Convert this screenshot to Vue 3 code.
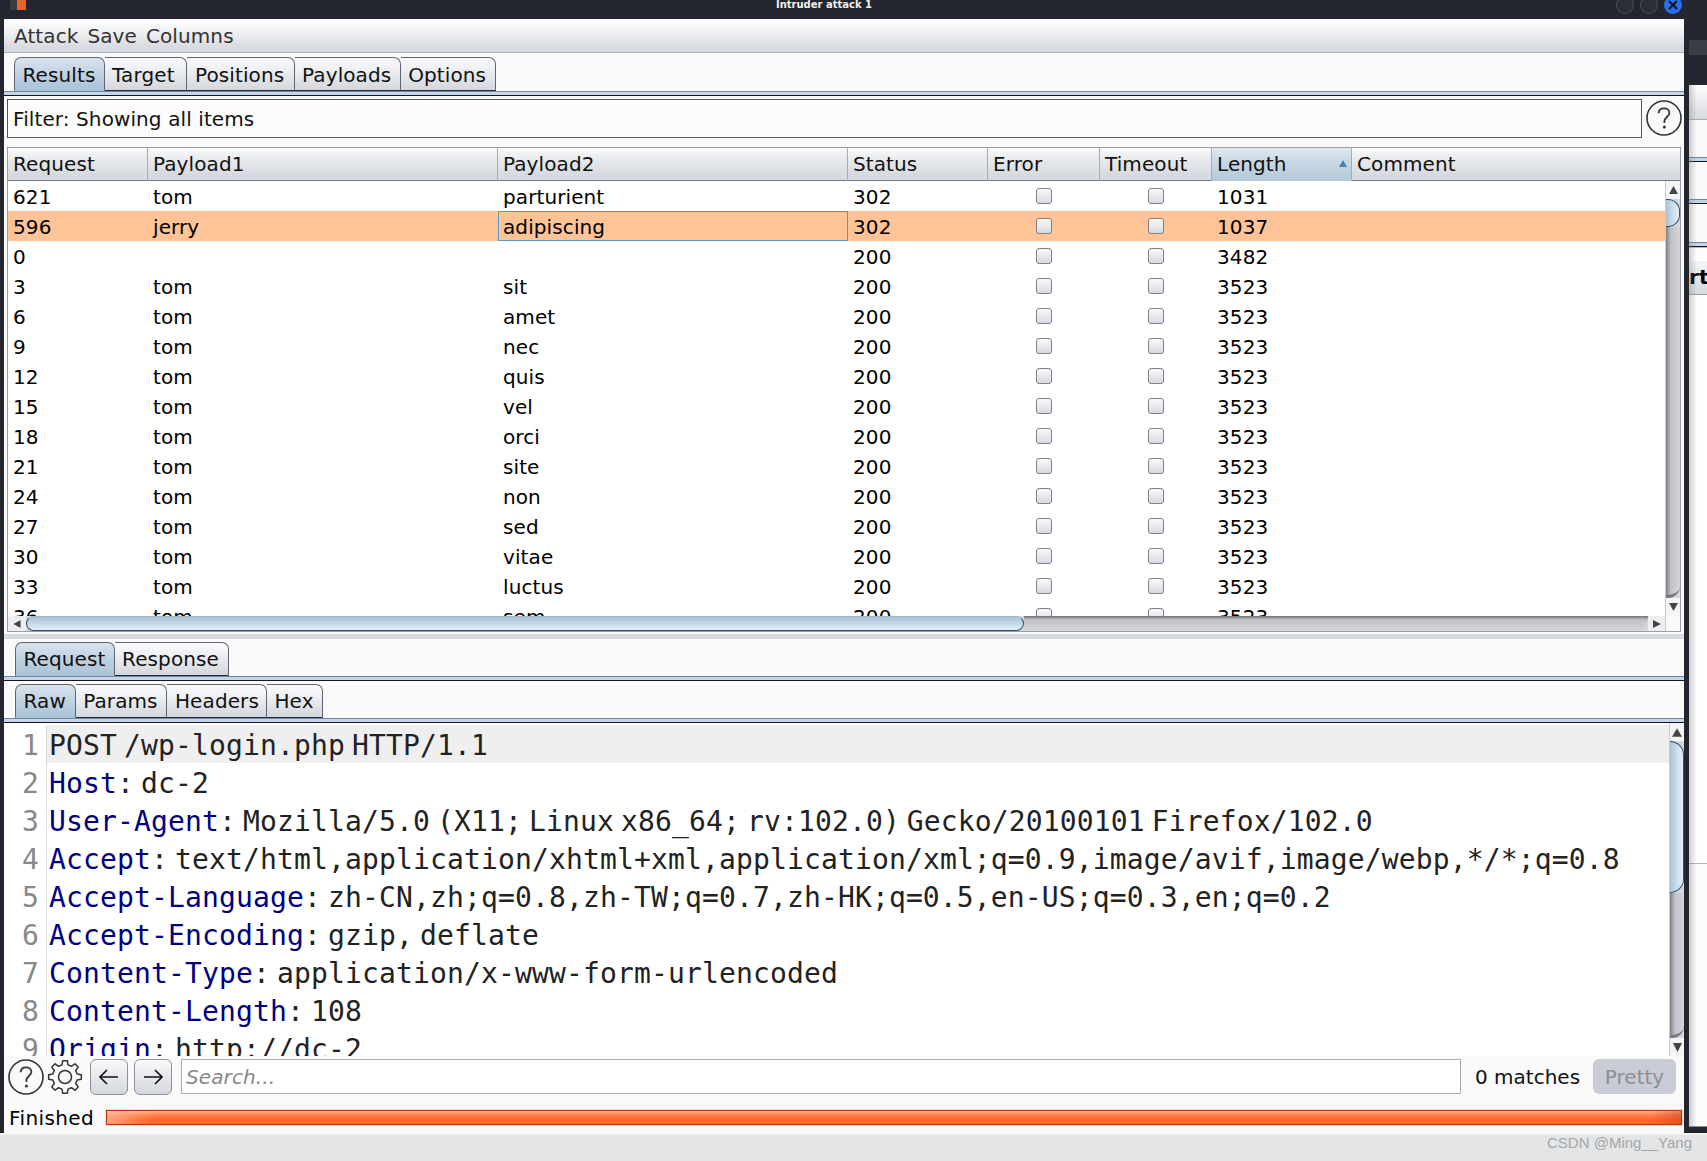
<script setup>
const menus = ['Attack', 'Save', 'Columns']
const mainTabs = [
  { label: 'Results', width: 90.6 },
  { label: 'Target', width: 82.9 },
  { label: 'Positions', width: 107.1 },
  { label: 'Payloads', width: 106.1 },
  { label: 'Options', width: 95.7 }
]
const messageTabs = [
  { label: 'Request', width: 99.6 },
  { label: 'Response', width: 114 }
]
const viewTabs = [
  { label: 'Raw', width: 60.7 },
  { label: 'Params', width: 91.8 },
  { label: 'Headers', width: 99.5 },
  { label: 'Hex', width: 56 }
]
const columns = ['Request', 'Payload1', 'Payload2', 'Status', 'Error', 'Timeout', 'Length', 'Comment']
const rows = [
  ['621', 'tom', 'parturient', '302', '1031'],
  ['596', 'jerry', 'adipiscing', '302', '1037'],
  ['0', '', '', '200', '3482'],
  ['3', 'tom', 'sit', '200', '3523'],
  ['6', 'tom', 'amet', '200', '3523'],
  ['9', 'tom', 'nec', '200', '3523'],
  ['12', 'tom', 'quis', '200', '3523'],
  ['15', 'tom', 'vel', '200', '3523'],
  ['18', 'tom', 'orci', '200', '3523'],
  ['21', 'tom', 'site', '200', '3523'],
  ['24', 'tom', 'non', '200', '3523'],
  ['27', 'tom', 'sed', '200', '3523'],
  ['30', 'tom', 'vitae', '200', '3523'],
  ['33', 'tom', 'luctus', '200', '3523'],
  ['36', 'tom', 'sem', '200', '3523']
]
const lines = [
  ['', 'POST /wp-login.php HTTP/1.1'],
  ['Host', ': dc-2'],
  ['User-Agent', ': Mozilla/5.0 (X11; Linux x86_64; rv:102.0) Gecko/20100101 Firefox/102.0'],
  ['Accept', ': text/html,application/xhtml+xml,application/xml;q=0.9,image/avif,image/webp,*/*;q=0.8'],
  ['Accept-Language', ': zh-CN,zh;q=0.8,zh-TW;q=0.7,zh-HK;q=0.5,en-US;q=0.3,en;q=0.2'],
  ['Accept-Encoding', ': gzip, deflate'],
  ['Content-Type', ': application/x-www-form-urlencoded'],
  ['Content-Length', ': 108'],
  ['Origin', ': http://dc-2']
]
const gearPath = (() => {
  const teeth = 8
  const pts = []
  for (let i = 0; i < teeth; i++) {
    const a = (i / teeth) * Math.PI * 2 - Math.PI / 2
    const w = Math.PI / teeth
    const add = (r, t) => pts.push([(18 + r * Math.cos(t)).toFixed(2), (18 + r * Math.sin(t)).toFixed(2)])
    add(12.5, a - w * 0.62)
    add(16.5, a - w * 0.36)
    add(16.5, a + w * 0.36)
    add(12.5, a + w * 0.62)
  }
  return 'M' + pts.map((p) => p.join(' ')).join('L') + 'Z'
})()
</script>

<template>
  <div class="page">
    <div class="top">
      <div class="main-col">
        <div class="titlebar">
          <div class="logo"><span class="logo-l"></span><span class="logo-r"></span></div>
          <div class="title">Intruder attack 1</div>
          <div class="winbtns">
            <span class="wb"></span>
            <span class="wb"></span>
            <span class="wb close">
              <svg width="18" height="18" viewBox="0 0 18 18"><path d="M5 5L13 13M13 5L5 13" stroke="#11151f" stroke-width="2.2" /></svg>
            </span>
          </div>
        </div>
        <div class="window">
          <div class="menubar"><span v-for="m in menus" :key="m">{{ m }}</span></div>

          <div class="tabs first-tabs">
            <div v-for="(t, i) in mainTabs" :key="t.label" class="tab" :class="{ active: i === 0 }" :style="{ width: t.width + 'px' }">{{ t.label }}</div>
          </div>
          <div class="tabline"></div>

          <div class="filter-row">
            <div class="filter">Filter: Showing all items</div>
            <svg class="help" width="36" height="36" viewBox="0 0 36 36">
              <circle cx="18" cy="18" r="17" fill="none" stroke="#333" stroke-width="1.6" />
              <path d="M12.6 13.2C12.8 9.8 15.2 8.4 18 8.4C21 8.4 23.4 10.2 23.4 13C23.4 16.6 18.4 17 18.4 21.6V23" fill="none" stroke="#333" stroke-width="1.8" />
              <circle cx="18.4" cy="27" r="1.5" fill="#333" />
            </svg>
          </div>

          <div class="table">
            <div class="thead">
              <div v-for="c in columns" :key="c" class="th" :class="{ sorted: c === 'Length' }">
                {{ c }}
                <svg v-if="c === 'Length'" class="sort" width="8" height="7" viewBox="0 0 8 7"><path d="M4 0L8 7H0Z" fill="#4b80b5" /></svg>
              </div>
            </div>
            <div class="tbody">
              <div class="rows">
                <div v-for="(r, i) in rows" :key="r[0]" class="row" :class="{ selected: i === 1 }">
                  <div class="td">{{ r[0] }}</div>
                  <div class="td">{{ r[1] }}</div>
                  <div class="td" :class="{ focused: i === 1 }">{{ r[2] }}</div>
                  <div class="td">{{ r[3] }}</div>
                  <div class="td center"><span class="check"></span></div>
                  <div class="td center"><span class="check"></span></div>
                  <div class="td">{{ r[4] }}</div>
                  <div class="td"></div>
                </div>
              </div>
              <div class="vbar">
                <div class="arrow-v"><svg width="9" height="8" viewBox="0 0 10 9"><path d="M5 0L10 9H0Z" fill="#444" /></svg></div>
                <div class="vthumb small"></div>
                <div class="vtrack"></div>
                <div class="arrow-v"><svg width="9" height="8" viewBox="0 0 10 9"><path d="M5 9L10 0H0Z" fill="#444" /></svg></div>
              </div>
            </div>
            <div class="hbar">
              <div class="arrow-h left"><svg width="8" height="8" viewBox="0 0 8 9"><path d="M0 4.5L8 0V9Z" fill="#444" /></svg></div>
              <div class="hthumb"></div>
              <div class="htrack"></div>
              <div class="arrow-h right"><svg width="8" height="8" viewBox="0 0 9 9"><path d="M9 4.5L0 0V9Z" fill="#444" /></svg></div>
              <div class="corner"></div>
            </div>
          </div>

          <div class="divider"></div>

          <div class="tabs lower">
            <div v-for="(t, i) in messageTabs" :key="t.label" class="tab" :class="{ active: i === 0 }" :style="{ width: t.width + 'px' }">{{ t.label }}</div>
          </div>
          <div class="tabline"></div>
          <div class="tabs lower">
            <div v-for="(t, i) in viewTabs" :key="t.label" class="tab" :class="{ active: i === 0 }" :style="{ width: t.width + 'px' }">{{ t.label }}</div>
          </div>
          <div class="tabline"></div>

          <div class="editor">
            <div class="code">
              <div v-for="(l, i) in lines" :key="i" class="line" :class="{ current: i === 0 }">
                <span class="num">{{ i + 1 }}</span>
                <span class="text"><span class="key">{{ l[0] }}</span>{{ l[1] }}</span>
              </div>
            </div>
            <div class="vbar big">
              <div class="arrow-v"><svg width="10" height="9" viewBox="0 0 12 10"><path d="M6 0L12 10H0Z" fill="#444" /></svg></div>
              <div class="vthumb large"></div>
              <div class="vtrack"></div>
              <div class="arrow-v"><svg width="9" height="9" viewBox="0 0 10 10"><path d="M5 10L10 0H0Z" fill="#444" /></svg></div>
            </div>
          </div>

          <div class="toolbar">
            <svg class="t-help" width="36" height="36" viewBox="0 0 36 36">
              <circle cx="18" cy="18" r="17" fill="none" stroke="#333" stroke-width="1.6" />
              <path d="M12.6 13.2C12.8 9.8 15.2 8.4 18 8.4C21 8.4 23.4 10.2 23.4 13C23.4 16.6 18.4 17 18.4 21.6V23" fill="none" stroke="#333" stroke-width="1.8" />
              <circle cx="18.4" cy="27" r="1.5" fill="#333" />
            </svg>
            <svg class="t-gear" width="36" height="36" viewBox="0 0 36 36">
              <path :d="gearPath" fill="none" stroke="#333" stroke-width="1.5" stroke-linejoin="round" />
              <circle cx="18" cy="18" r="6.5" fill="none" stroke="#333" stroke-width="1.5" />
            </svg>
            <button class="nav back">
              <svg width="20" height="16" viewBox="0 0 20 16"><path d="M1 8H19M8 1L1 8L8 15" fill="none" stroke="#111" stroke-width="1.6" /></svg>
            </button>
            <button class="nav fwd">
              <svg width="20" height="16" viewBox="0 0 20 16"><path d="M1 8H19M12 1L19 8L12 15" fill="none" stroke="#111" stroke-width="1.6" /></svg>
            </button>
            <div class="search">Search...</div>
            <span class="matches">0 matches</span>
            <button class="pretty">Pretty</button>
          </div>

          <div class="status">
            <span class="finished">Finished</span>
            <div class="progress"><div class="bar"></div></div>
          </div>
        </div>
      </div>

      <div class="strip">
        <div class="s-dark"><div class="s-lighter"></div></div>
        <div class="s-menu"></div>
        <div class="s-plain s1"></div>
        <div class="tabline"></div>
        <div class="s-plain s1"></div>
        <div class="tabline"></div>
        <div class="s-plain s2"></div>
        <div class="tabline"></div>
        <div class="s-gap"></div>
        <div class="s-tab">rt</div>
        <div class="s-white"></div>
        <div class="s-white2"></div>
        <div class="s-end"></div>
      </div>
    </div>
    <div class="footer"><span>CSDN @Ming__Yang</span></div>
  </div>
</template>

<style>
html, body { margin: 0; padding: 0; background: #e4e5e7; overflow: hidden; }
</style>

<style scoped>
.page {
  width: 1707px;
  height: 1161px;
  display: flex;
  flex-direction: column;
  overflow: hidden;
  font-family: "DejaVu Sans", sans-serif;
  font-size: 20px;
  letter-spacing: 0.1px;
  color: #000;
}
.top { height: 1133px; display: flex; flex: none; }
.main-col {
  width: 1689px;
  flex: none;
  background: #23262f;
  display: flex;
  flex-direction: column;
}
.titlebar { height: 19px; flex: none; position: relative; overflow: hidden; }
.logo { position: absolute; left: 10px; top: -3px; display: flex; }
.logo-l { width: 7px; height: 13px; background: #3c3c40; }
.logo-r { width: 9px; height: 13px; background: #e8632c; }
.title {
  position: absolute;
  left: 0;
  top: -2px;
  width: 1648px;
  text-align: center;
  font: bold 10px/14px "DejaVu Sans", sans-serif;
  letter-spacing: 0;
  color: #f1f1f1;
}
.winbtns { position: absolute; left: 1616px; top: -4px; display: flex; gap: 6px; }
.wb {
  width: 18px;
  height: 18px;
  border-radius: 50%;
  background: #2b2e38;
  box-shadow: inset 0 0 0 1px #4a4d57;
  display: block;
}
.close { background: #2a6fe8; box-shadow: none; }
.close svg { display: block; }

.window {
  width: 1680px;
  height: 1114px;
  margin-left: 4px;
  background: #fafafa;
  display: flex;
  flex-direction: column;
}
.menubar {
  height: 34px;
  flex: none;
  box-sizing: border-box;
  display: flex;
  align-items: center;
  gap: 9px;
  padding-left: 10px;
  background: linear-gradient(#ffffff, #f6f7f8 25%, #d6d9df 90%);
  border-bottom: 1px solid #a9acb3;
  color: #333;
}
.tabs {
  display: flex;
  flex: none;
  height: 34px;
  margin-top: 3px;
  padding-left: 10px;
}
.tabs.lower { padding-left: 11px; }
.first-tabs { margin-top: 4px; }
.tab {
  box-sizing: border-box;
  flex: none;
  height: 34px;
  padding-left: 7.5px;
  line-height: 33px;
  white-space: nowrap;
  border: 1px solid #5f6673;
  border-bottom: 1px solid #222a38;
  border-left-width: 0;
  border-radius: 0 7px 0 0;
  background: linear-gradient(#fbfbfc, #eceef1 40%, #d3d6dc);
  color: #111;
}
.tab:first-child { border-left-width: 1px; border-radius: 7px 7px 0 0; }
.first-tabs .tab { line-height: 34px; }
.tab.active {
  background: linear-gradient(#d9e4ed, #c4d5e3 40%, #a9c3d8);
  border-bottom-color: #a9c3d8;
  border-radius: 7px 7px 0 0;
}
.tabline {
  height: 5px;
  flex: none;
  box-sizing: border-box;
  border-top: 1px solid #73869b;
  background: #c3d6ea;
  border-bottom: 1px solid #14161c;
}
.filter-row {
  display: flex;
  flex: none;
  height: 38px;
  margin-top: 3px;
  padding-left: 3px;
  align-items: flex-start;
}
.filter {
  box-sizing: border-box;
  width: 1635px;
  height: 39px;
  line-height: 38px;
  padding-left: 5px;
  border: 1px solid #55585f;
  background: #fcfcfc;
  color: #111;
}
.help { margin-left: 4px; flex: none; margin-top: 1px; }

.table {
  box-sizing: border-box;
  flex: none;
  width: 1674px;
  height: 485px;
  margin: 10px 0 0 3px;
  border: 1px solid #9a9da5;
  display: flex;
  flex-direction: column;
}
.thead, .row {
  display: grid;
  grid-template-columns: 140px 350px 350px 140px 112px 112px 140px 1fr;
}
.thead {
  height: 33px;
  flex: none;
  box-sizing: border-box;
  border-bottom: 1px solid #74777e;
  background: linear-gradient(#fbfbfc, #eef0f2 20%, #d6d9df 85%);
}
.th {
  box-sizing: border-box;
  padding-left: 5px;
  line-height: 33px;
  border-right: 1px solid #a9acb4;
  color: #111;
  position: relative;
}
.th:last-child { border-right: 0; }
.th.sorted { background: linear-gradient(#e2e9ef, #c8d8e4 40%, #b3c8d9); }
.sort { position: absolute; right: 4px; top: 12px; }
.tbody { flex: 1; min-height: 0; display: flex; }
.rows { flex: 1; min-width: 0; overflow: hidden; background: #fff; }
.row { height: 30px; }
.row.selected { background: #fec396; }
.td {
  box-sizing: border-box;
  height: 30px;
  padding-left: 5px;
  line-height: 32px;
  white-space: nowrap;
}
.td.center { display: flex; align-items: center; justify-content: center; padding-left: 0; }
.td.focused {
  border: 1px solid #5c94cc;
  line-height: 30px;
  padding-left: 4px;
}
.check {
  width: 16px;
  height: 16px;
  box-sizing: border-box;
  border: 1.5px solid #7f828b;
  border-radius: 3px;
  background: linear-gradient(#fafafb, #d6d9e0);
  display: block;
}

.vbar { width: 15px; flex: none; display: flex; flex-direction: column; background: #d6d8dd; border-left: 1px solid #c8cad0; box-sizing: border-box; }
.arrow-v { height: 18px; flex: none; display: flex; align-items: center; justify-content: center; background: #f4f5f6; }
.vthumb {
  flex: none;
  box-sizing: border-box;
  border: 1.5px solid #2f4f6d;
  border-left: 0;
  background: linear-gradient(90deg, #a9c3d8, #c9dcea 50%, #e4f1f9);
}
.vthumb.small { height: 28px; border-radius: 0 12px 12px 0; }
.vthumb.large { height: 152px; border-radius: 0 14px 14px 0; }
.vtrack {
  flex: 1;
  background: linear-gradient(90deg, #7e8085, #c0c2c8 35%, #d4d6dc);
  border-radius: 0 0 12px 0;
  border-bottom: 3px solid #77797e;
}
.hbar { height: 15px; flex: none; display: flex; background: #d6d8dd; }
.arrow-h { flex: none; display: flex; align-items: center; justify-content: center; background: #eceef0; }
.arrow-h.left { width: 18px; }
.arrow-h.right { width: 17px; }
.hthumb {
  width: 998px;
  flex: none;
  box-sizing: border-box;
  border: 1.5px solid #2f4f6d;
  border-top-color: #9fb6c9;
  border-radius: 13px;
  background: linear-gradient(#a9c3d8, #c9dcea 60%, #e2f0f8);
}
.htrack { flex: 1; background: linear-gradient(#6f7176, #c0c2c7 25%, #d4d6db); border-radius: 0 0 14px 0; }
.corner { width: 15px; flex: none; background: #fafafa; border-left: 1px solid #c8cad0; box-sizing: border-box; }
.divider { height: 5px; flex: none; margin-top: 2px; background: #d6d9df; }

.editor { height: 333px; flex: none; display: flex; background: #fff; }
.code {
  flex: 1;
  min-width: 0;
  overflow: hidden;
  padding-top: 2px;
  font-family: "DejaVu Sans Mono", monospace;
  font-size: 28px;
  line-height: 42px;
  letter-spacing: 0.14px;
  word-spacing: -10px;
  color: #222;
}
.line { display: flex; height: 38px; }
.num {
  box-sizing: border-box;
  width: 43px;
  flex: none;
  padding-right: 7px;
  text-align: right;
  color: #888;
  border-right: 1px solid #dddddd;
}
.text { padding-left: 2px; white-space: pre; flex: 1; }
.line.current .text { background: #efefef; }
.key { color: #000080; }
.vbar.big { width: 15px; }

.toolbar {
  height: 44px;
  flex: none;
  box-sizing: border-box;
  padding-bottom: 3px;
  display: flex;
  align-items: center;
}
.t-help { margin-left: 4px; flex: none; }
.t-gear { margin-left: 3px; flex: none; }
.nav {
  box-sizing: border-box;
  width: 38px;
  height: 36px;
  padding: 0;
  border: 1px solid #8d9097;
  border-radius: 6px;
  background: linear-gradient(#f8f9fa, #d4d7de);
  display: flex;
  align-items: center;
  justify-content: center;
  flex: none;
}
.back { margin-left: 7px; }
.fwd { margin-left: 6px; }
.search {
  box-sizing: border-box;
  width: 1280px;
  height: 35px;
  margin-left: 9px;
  padding-left: 4px;
  line-height: 35px;
  background: #fff;
  border: 1px solid #a8abb0;
  color: #888;
  font-style: italic;
  flex: none;
}
.matches { margin-left: 14px; flex: none; color: #111; width: 118px; letter-spacing: 0; }
.pretty {
  box-sizing: border-box;
  width: 83px;
  height: 35px;
  padding: 0;
  border: 0;
  border-radius: 6px;
  background: #c9ccd4;
  color: #8b8e96;
  font: 20px "DejaVu Sans", sans-serif;
  flex: none;
}
.status { flex: 1; display: flex; align-items: center; }
.finished { width: 101px; padding: 3px 0 0 5px; box-sizing: border-box; flex: none; letter-spacing: 0.4px; }
.progress {
  width: 1578px;
  flex: none;
  height: 17px;
  box-sizing: border-box;
  padding: 1px;
  background: #fbd9cb;
  margin-top: 2px;
}
.bar {
  height: 100%;
  box-sizing: border-box;
  border: 1px solid #c3300f;
  background:
    linear-gradient(90deg, rgba(255, 210, 190, 0.55), rgba(255, 210, 190, 0) 45px),
    linear-gradient(270deg, rgba(190, 60, 20, 0.45), rgba(190, 60, 20, 0) 30px),
    linear-gradient(#ffb795, #ff8a55 25%, #ff6a30 60%, #ff6328);
}

.strip {
  flex: 1;
  display: flex;
  flex-direction: column;
  background: #fff;
  position: relative;
  overflow: hidden;
}
.strip::after {
  content: "";
  position: absolute;
  left: 0;
  top: 85px;
  bottom: 7px;
  width: 8px;
  background: linear-gradient(90deg, rgba(120, 120, 125, 0.35), rgba(120, 120, 125, 0));
}
.s-dark { height: 85px; flex: none; background: #23262f; padding-top: 40px; box-sizing: border-box; }
.s-lighter { height: 15px; background: #3b3d45; }
.s-menu {
  height: 35px;
  flex: none;
  box-sizing: border-box;
  background: linear-gradient(#ffffff, #d6d9df);
  border-bottom: 1px solid #a9acb3;
}
.s-plain { background: #fafafa; flex: none; }
.s1 { height: 37px; }
.s2 { height: 38px; }
.s-gap { height: 14px; flex: none; background: #fff; border-top: 1px solid #b8bbc2; box-sizing: border-box; }
.s-tab {
  height: 34px;
  flex: none;
  box-sizing: border-box;
  line-height: 32px;
  padding-left: 0;
  font-weight: 700;
  background: linear-gradient(#f4f5f7, #d6d9df);
  border-bottom: 1px solid #9a9da5;
}
.s-white { height: 568px; flex: none; background: #fff; border-bottom: 1px solid #b4b6bb; }
.s-white2 { flex: 1; background: #fbfbfb; }
.s-end { height: 7px; flex: none; background: #23262f; border-top: 1px solid #8a8c90; box-sizing: border-box; }

.footer {
  flex: 1;
  box-sizing: border-box;
  border-top: 2px solid #f3f3f4;
  background: #e4e5e7;
  display: flex;
  justify-content: flex-end;
  padding-right: 15px;
}
.footer span {
  font: 15px/16px "Liberation Sans", Arial, sans-serif;
  letter-spacing: 0;
  color: #a5a6a9;
}
</style>
